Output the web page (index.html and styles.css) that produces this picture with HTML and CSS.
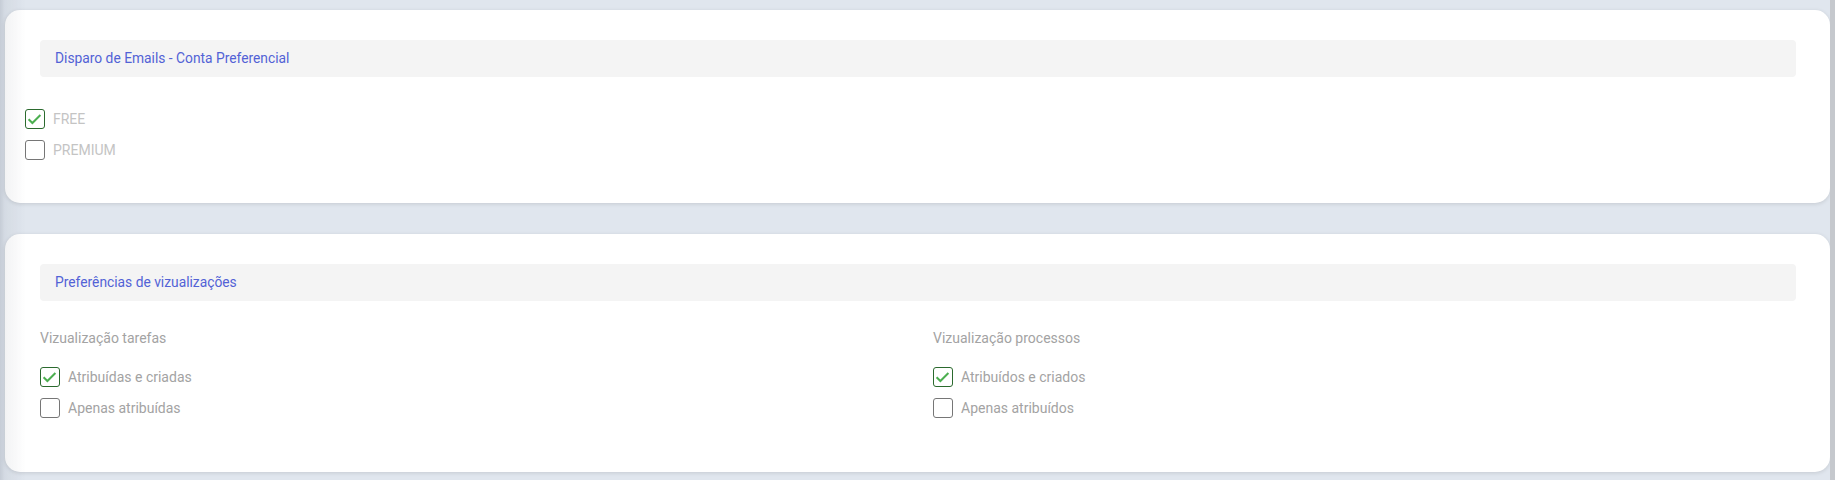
FILE: index.html
```html
<!DOCTYPE html>
<html lang="pt-BR">
<head>
<meta charset="utf-8">
<title>Preferências</title>
<link rel="stylesheet" href="styles.css">
</head>
<body>
<div class="page">
  <main class="main">
    <section class="card card-emails">
      <div class="section-header">Disparo de Emails - Conta Preferencial</div>
      <div class="check-list check-list-emails">
        <label class="check-row light">
          <span class="box checked"><svg viewBox="0 0 20 20" width="20" height="20"><path d="M3.6 10.2 L7.4 14 L15.4 6" fill="none" stroke="#4caf50" stroke-width="2"/></svg></span>
          <span class="check-label">FREE</span>
        </label>
        <label class="check-row light">
          <span class="box"></span>
          <span class="check-label">PREMIUM</span>
        </label>
      </div>
    </section>

    <section class="card card-views">
      <div class="section-header">Preferências de vizualizações</div>
      <div class="views-grid">
        <div class="view-col">
          <div class="view-title">Vizualização tarefas</div>
          <div class="check-list">
            <label class="check-row">
              <span class="box checked"><svg viewBox="0 0 20 20" width="20" height="20"><path d="M3.6 10.2 L7.4 14 L15.4 6" fill="none" stroke="#4caf50" stroke-width="2"/></svg></span>
              <span class="check-label">Atribuídas e criadas</span>
            </label>
            <label class="check-row">
              <span class="box"></span>
              <span class="check-label">Apenas atribuídas</span>
            </label>
          </div>
        </div>
        <div class="view-col">
          <div class="view-title">Vizualização processos</div>
          <div class="check-list">
            <label class="check-row">
              <span class="box checked"><svg viewBox="0 0 20 20" width="20" height="20"><path d="M3.6 10.2 L7.4 14 L15.4 6" fill="none" stroke="#4caf50" stroke-width="2"/></svg></span>
              <span class="check-label">Atribuídos e criados</span>
            </label>
            <label class="check-row">
              <span class="box"></span>
              <span class="check-label">Apenas atribuídos</span>
            </label>
          </div>
        </div>
      </div>
    </section>
  </main>
  <div class="scroll-strip"></div>
</div>
<div class="left-shade"></div>
</body>
</html>
```

FILE: styles.css
```css
html, body {
  margin: 0;
  padding: 0;
}

body {
  background: #e0e6ee;
  font-family: Roboto, "Liberation Sans", Arial, sans-serif;
  font-size: 14px;
  color: #9e9e9e;
  height: 480px;
  overflow: hidden;
}

.page {
  display: flex;
  height: 480px;
}

.main {
  flex: 1;
  padding: 10px 0 0 5px;
  display: flex;
  flex-direction: column;
  gap: 31px;
}

.scroll-strip {
  width: 5px;
  background: #c5c8cd;
}

.card {
  background: #ffffff;
  border-radius: 15px;
  box-shadow: 0 1px 4px rgba(0, 0, 0, 0.12);
}

.card-emails {
  height: 193px;
  box-sizing: border-box;
  padding: 30px 34px 0 20px;
}

.card-emails .section-header {
  margin-left: 15px;
}

.card-views {
  height: 238px;
  box-sizing: border-box;
  padding: 30px 34px 0 35px;
}

.section-header {
  height: 37px;
  box-sizing: border-box;
  background: #f4f4f4;
  border-radius: 4px;
  padding: 0 15px 2px;
  display: flex;
  align-items: center;
  color: #5262d6;
  font-size: 13.8px;
}

.check-list {
  display: flex;
  flex-direction: column;
  gap: 11px;
}

.check-list-emails {
  margin-top: 32px;
}

.check-row {
  display: flex;
  align-items: center;
  gap: 8px;
  height: 20px;
  cursor: pointer;
}

.box {
  width: 20px;
  height: 20px;
  box-sizing: border-box;
  border: 1px solid #767676;
  border-radius: 3px;
  display: flex;
  align-items: center;
  justify-content: center;
  flex: none;
  position: relative;
}

.box svg {
  position: absolute;
  left: -1px;
  top: -1px;
}

.box.checked {
  border-color: #2b6a2e;
}

.check-label {
  font-size: 14px;
  line-height: 20px;
  color: #a3a3a3;
}

.check-row.light .check-label {
  color: #c4c4c4;
}

.views-grid {
  display: grid;
  grid-template-columns: 1fr 1fr;
  column-gap: 30px;
  margin-top: 27px;
}

.view-title {
  font-size: 14px;
  line-height: 20px;
  color: #a3a3a3;
  margin-bottom: 19px;
}

.left-shade {
  position: fixed;
  left: 0;
  top: 0;
  bottom: 0;
  width: 26px;
  pointer-events: none;
  background: linear-gradient(to right, rgba(40, 50, 70, 0.14) 0, rgba(40, 50, 70, 0.06) 5px, rgba(40, 50, 70, 0) 26px);
}
```
